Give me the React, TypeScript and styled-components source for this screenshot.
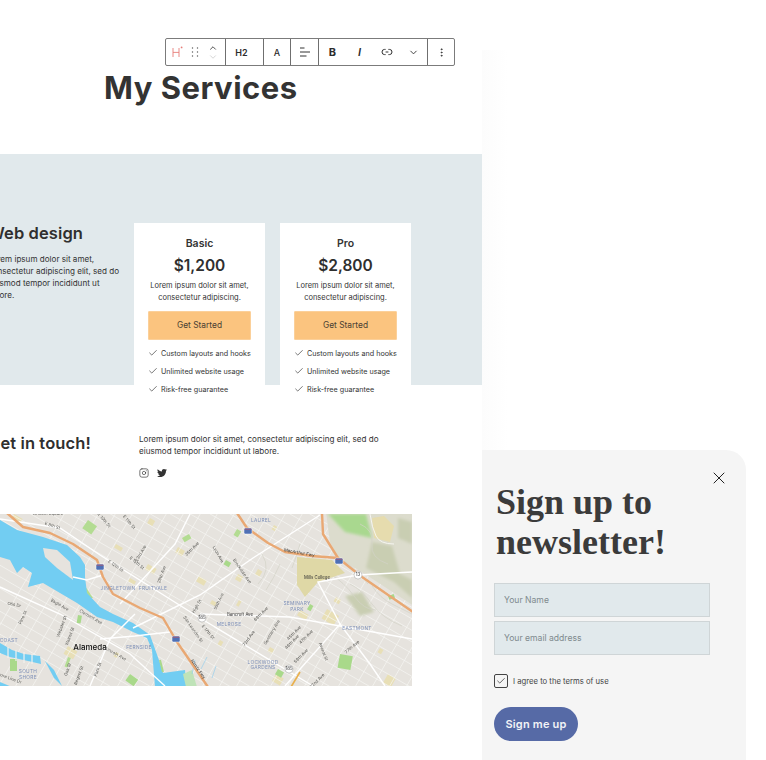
import React from 'react'
import styled, { createGlobalStyle } from 'styled-components'
import { Check, ChevronDown, ChevronUp, Instagram, MoreVertical, X } from 'lucide-react'
import { FaTwitter } from 'react-icons/fa'

const GlobalStyle = createGlobalStyle`
  html, body { margin: 0; padding: 0; background: #fff; }
  body { font-family: Inter, "Noto Sans", sans-serif; color: #333; }
  * { box-sizing: border-box; }
`

const Stage = styled.div`
  display: flex;
  width: 766px;
  height: 760px;
  overflow: hidden;
  background: #fff;
`
const PageColumn = styled.main`
  position: relative;
  flex: 0 0 482px;
  &::after {
    content: '';
    position: absolute;
    top: 50px;
    left: 100%;
    width: 26px;
    height: 400px;
    background: linear-gradient(90deg, #fcfcfc, #fff);
  }
`
const TitleBlock = styled.header`
  height: 154px;
  padding: 69px 0 0 104px;
`
const Title = styled.h1`
  margin: 0;
  font-size: 31px;
  line-height: 38px;
  font-weight: 700;
  color: #333;
  letter-spacing: 0.5px;
`

/* block toolbar */
const Toolbar = styled.div`
  position: absolute;
  top: 38px;
  left: 165px;
  display: flex;
  width: 290px;
  height: 28px;
  background: #fff;
  border: 1px solid #7b7b7b;
  border-radius: 2px;
`
const ToolGroup = styled.div<{ $width: number; $last?: boolean; $inset?: number; $trail?: number }>`
  display: flex;
  flex: 0 0 ${({ $width }) => $width}px;
  align-items: center;
  padding-left: ${({ $inset }) => $inset ?? 0}px;
  padding-right: ${({ $trail }) => $trail ?? 0}px;
  border-right: ${({ $last }) => ($last ? 'none' : '1px solid #6f6f6f')};
`
const ToolSlot = styled.span<{ $width?: number }>`
  display: flex;
  flex: ${({ $width }) => ($width ? `0 0 ${$width}px` : '1')};
  align-items: center;
  justify-content: center;
`
const ToolText = styled.span<{ $italic?: boolean; $size?: number; $weight?: number }>`
  font-size: ${({ $size }) => $size ?? 9}px;
  font-weight: ${({ $weight }) => $weight ?? 600};
  font-style: ${({ $italic }) => ($italic ? 'italic' : 'normal')};
  color: #2c2c2c;
`
const MoverStack = styled.div`
  display: flex;
  flex-direction: column;
  align-items: center;
  color: #333;
  svg + svg { color: #bbb; margin-top: -1px; }
`

/* services band */
const Band = styled.section`
  display: flex;
  height: 231px;
  padding-top: 68px;
  background: #e1e9ec;
`
const Intro = styled.div`
  flex: 0 0 138px;
  margin-left: -12px;
  margin-right: 8px;
`
const SectionHeading = styled.h2`
  margin: 0;
  font-size: 16.5px;
  line-height: 22px;
  font-weight: 600;
  color: #2f2f2f;
  letter-spacing: 0.1px;
  white-space: nowrap;
`
const IntroText = styled.p`
  width: 136px;
  margin: 9px 0 0;
  font-size: 8.1px;
  line-height: 12px;
  color: #333;
`
const Card = styled.article`
  flex: 0 0 131px;
  height: 180px;
  margin-top: 1px;
  margin-right: 15px;
  padding: 14px 14px 0;
  background: #fff;
  text-align: center;
`
const PlanName = styled.h3`
  margin: 0;
  font-size: 10.5px;
  line-height: 13px;
  font-weight: 600;
  color: #333;
`
const Price = styled.div`
  margin-top: 5px;
  font-size: 15.5px;
  line-height: 22px;
  font-weight: 600;
  color: #2f2f2f;
`
const PlanText = styled.p`
  margin: 3px 0 0;
  font-size: 7.5px;
  line-height: 12px;
  color: #333;
`
const CtaButton = styled.button`
  display: block;
  width: 103px;
  height: 29px;
  margin-top: 7px;
  padding: 0 0 2px;
  border: 1px solid #fbd09a;
  border-radius: 1px;
  background: #fbc47f;
  font-family: inherit;
  font-size: 8.4px;
  color: #4a4032;
`
const FeatureList = styled.ul`
  margin: 4px 0 0;
  padding: 0;
  list-style: none;
  text-align: left;
`
const Feature = styled.li`
  display: flex;
  align-items: center;
  gap: 3px;
  height: 18.2px;
  font-size: 7.2px;
  color: #333;
  white-space: nowrap;
  svg { flex: none; }
`

/* contact */
const Contact = styled.section`
  display: flex;
  height: 129px;
  padding-top: 48px;
`
const ContactHead = styled.div`
  flex: 0 0 151px;
  margin: -1px 0 0 -12px;
`
const ContactBody = styled.div`
  width: 250px;
`
const ContactText = styled.p`
  margin: 0;
  font-size: 8.1px;
  line-height: 12px;
  color: #333;
`
const Socials = styled.div`
  display: flex;
  align-items: center;
  gap: 8px;
  margin-top: 11px;
  color: #333;
`
const MapFrame = styled.div`
  width: 412px;
  height: 172px;
  overflow: hidden;
  svg { display: block; }
`
const MapLabel = styled.text<{ $kind: 'street' | 'area' | 'city' | 'road' }>`
  font-family: Inter, sans-serif;
  font-size: ${({ $kind }) => ($kind === 'city' ? 8 : $kind === 'area' ? 4.8 : 4.3)}px;
  font-weight: ${({ $kind }) => ($kind === 'city' ? 500 : 400)};
  letter-spacing: ${({ $kind }) => ($kind === 'area' ? 0.3 : 0)}px;
  fill: ${({ $kind }) => ($kind === 'area' ? '#7e90b8' : $kind === 'city' ? '#111' : $kind === 'road' ? '#333' : '#5c5c58')};
  text-anchor: middle;
`

/* newsletter */
const SidePane = styled.aside`
  flex: 0 0 264px;
  padding-top: 450px;
`
const Panel = styled.div`
  position: relative;
  height: 310px;
  padding: 32px 36px 0 12px;
  background: #f5f5f5;
  border-top-right-radius: 20px;
`
const CloseButton = styled.button`
  position: absolute;
  top: 18px;
  right: 17px;
  display: flex;
  padding: 0;
  border: 0;
  background: none;
  color: #222;
`
const PanelTitle = styled.h2`
  margin: 0 0 21px 2px;
  font-family: "Liberation Serif", serif;
  font-size: 36px;
  line-height: 40px;
  font-weight: 700;
  color: #3b3b3b;
`
const Field = styled.input`
  display: block;
  width: 216px;
  height: 34px;
  margin-bottom: 4px;
  padding: 0 9px;
  background: #e1e9ec;
  border: 1px solid #cfd5d7;
  border-radius: 0;
  font-family: inherit;
  font-size: 8.6px;
  outline: none;
  &::placeholder { color: #7f8a8e; opacity: 1; }
`
const Agree = styled.label`
  display: flex;
  align-items: center;
  gap: 5px;
  margin-top: 19px;
  font-size: 7.7px;
  color: #444;
`
const Tick = styled.span`
  display: flex;
  align-items: center;
  justify-content: center;
  width: 14px;
  height: 14px;
  border: 1.5px solid #444;
  border-radius: 2px;
  color: #333;
`
const SubmitButton = styled.button`
  display: block;
  width: 84px;
  height: 34px;
  margin-top: 19px;
  padding: 0;
  border: 0;
  border-radius: 17px;
  background: #566aa6;
  font-family: inherit;
  font-size: 11px;
  font-weight: 600;
  letter-spacing: 0.2px;
  color: #f2f3f7;
`

function HeadingIcon() {
  return (
    <svg width="14" height="14" viewBox="0 0 14 14" fill="none" stroke="#e77d78" strokeWidth="0.9">
      <path d="M3 3v9M9 3v9M3 7.4h6" />
      <circle cx="11.6" cy="2.4" r="0.9" fill="#e77d78" stroke="none" />
    </svg>
  )
}
function DragIcon() {
  return (
    <svg width="8" height="10" viewBox="0 0 8 10" fill="#555">
      {[1, 5, 9].map((cy) => [1.5, 6.5].map((cx) => <rect key={`${cx}-${cy}`} x={cx - 0.6} y={cy - 0.6} width="1.2" height="1.2" />))}
    </svg>
  )
}
function AlignIcon() {
  return (
    <svg width="12" height="12" viewBox="0 0 12 12" stroke="#333" strokeWidth="1">
      <path d="M1 2h4.5M1 6h10M1 10h6.5" />
    </svg>
  )
}
function LinkIcon() {
  return (
    <svg width="12" height="12" viewBox="0 0 12 12" fill="none" stroke="#333" strokeWidth="1">
      <path d="M4.6 3.4H3.6a2.6 2.6 0 0 0 0 5.2h1M7.4 3.4h1a2.6 2.6 0 0 1 0 5.2h-1M4.6 6h2.8" />
    </svg>
  )
}

const toPoints = (pts: number[][]) => pts.map((p) => p.join(',')).join(' ')

// city street grid, two families of parallel lines
const streetsA = Array.from({ length: 34 }, (_, i) => -260 + i * 11.5)
const streetsB = Array.from({ length: 34 }, (_, i) => -40 + i * 17)

const majorRoads = [
  [[0, 5], [60, 14], [100, 41], [200, 104], [313, 172]],
  [[0, 73], [60, 100], [130, 140], [165, 172]],
  [[133, 114], [200, 81], [253, 44], [320, 1]],
  [[120, 90], [175, 30], [190, 0]],
  [[200, 100], [290, 103], [412, 125]],
  [[90, 172], [110, 125], [135, 100]],
  [[285, 172], [340, 110], [370, 150], [385, 172]],
  [[340, 110], [318, 68], [358, 61], [412, 58]],
  [[73, 63], [87, 66], [103, 61]],
  [[100, 125], [135, 122], [170, 118]]
]
const parks = [
  [88, 6, 11, 10, '#b3dc92', 35],
  [182, 24, 8, 5, '#b3dc92', -30],
  [226, 46, 6, 5, '#a9d98a', 30],
  [237, 15, 5, 7, '#b3dc92', 30],
  [340, 140, 13, 14, '#a9d98a', 10],
  [278, 155, 7, 6, '#a9d98a', 30],
  [310, 90, 4, 6, '#a9d98a', 30],
  [78, 101, 4, 8, '#a9d98a', 10],
  [68, 143, 3, 10, '#b3dc92', 20],
  [10, 145, 7, 12, '#a9d98a', 0],
  [388, 82, 6, 4, '#a9d98a', -20],
  [130, 160, 10, 8, '#a9d98a', 35]
]
const sandPatches = [
  [14, 0, 10, 5], [150, 4, 6, 6], [116, 30, 8, 4], [178, 33, 8, 6], [148, 50, 10, 6], [199, 62, 9, 6], [130, 64, 7, 4],
  [238, 60, 6, 6], [258, 55, 5, 6], [274, 11, 4, 5], [212, 86, 6, 4], [239, 86, 3, 6], [68, 132, 11, 9], [220, 126, 4, 5],
  [300, 96, 10, 6], [327, 95, 14, 11], [336, 83, 6, 5], [276, 160, 9, 8], [270, 133, 5, 5], [380, 134, 4, 5], [388, 160, 9, 10], [116, 138, 4, 5]
]
const hillShade = [
  [[372, 28], [392, 32], [400, 60], [412, 66], [412, 84], [394, 68], [366, 54]],
  [[345, 82], [362, 78], [374, 98], [360, 102]],
  [[398, 4], [412, 8], [412, 30], [398, 24]]
]
const contourLines = [
  'M330 60q14 8 24 22t22 14',
  'M350 70q12 6 22 20t30 22',
  'M372 72q8 12 20 18t20 10',
  'M342 46q12 6 26 24',
  'M300 30q-4 14 -8 24',
  'M262 40q10 16 -4 30',
  'M280 50q-6 14 -14 26',
  'M360 10q14 6 12 20t16 20'
]
const labels: [string, number, number, number, 'street' | 'area' | 'city' | 'road'][] = [
  ['Lincoln Square', 48, 1, 0, 'street'], ['E 8th St', 52, 13, 18, 'street'], ['E 10th St', 103, 7, 50, 'street'], ['E 11th St', 128, 9, 50, 'street'],
  ['E 12th St', 115, 53, 35, 'street'], ['E 15th St', 136, 50, 40, 'street'], ['23rd Ave', 142, 40, -60, 'street'], ['29th Ave', 163, 61, -70, 'street'],
  ['35th Ave', 193, 36, -45, 'street'], ['Lyon Ave', 217, 41, 60, 'street'], ['Brookdale Ave', 241, 58, 55, 'street'], ['55th Ave', 220, 88, -65, 'street'],
  ['High St', 198, 93, -60, 'street'], ['San Leandro St', 192, 116, 55, 'street'], ['E 17th St', 207, 119, 50, 'street'], ['Bancroft Ave', 240, 102, 0, 'road'],
  ['69th Ave', 262, 101, -45, 'street'], ['Seminary Ave', 273, 119, -60, 'street'], ['73rd Ave', 250, 125, -55, 'street'], ['MacArthur Fwy', 299, 40, 10, 'road'],
  ['Mills College', 317, 65, 0, 'road'], ['Eagle Ave', 59, 92, 30, 'street'], ['Clement Ave', 90, 104, 30, 'street'], ['Pine St', 24, 104, -65, 'street'],
  ['Webster St', 63, 113, -70, 'street'], ['Walnut St', 71, 123, -70, 'street'], ['Lincoln Ave', 115, 141, 30, 'street'], ['Oak St', 69, 156, -70, 'street'],
  ['Regent St', 80, 162, -70, 'street'], ['Park St', 99, 156, -70, 'street'], ['Shore Line Dr', 8, 165, 20, 'street'], ['45th Ave', 295, 120, -45, 'street'],
  ['46th Ave', 293, 129, -45, 'street'], ['47th Ave', 307, 124, -45, 'street'], ['59th Ave', 302, 143, -45, 'street'], ['Avenal St', 322, 138, 70, 'street'],
  ['77th Ave', 353, 134, -40, 'street'], ['82nd Ave', 318, 168, -45, 'street'], ['Nimitz Fwy', 197, 156, 55, 'road'], ['Otis Dr', 14, 92, 10, 'street'],
  ['SEMINARY', 297, 91, 0, 'area'], ['PARK', 297, 97, 0, 'area'], ['EASTMONT', 357, 116, 0, 'area'], ['MELROSE', 229, 112, 0, 'area'], ['LOCKWOOD', 263, 150, 0, 'area'],
  ['GARDENS', 263, 155, 0, 'area'], ['LAUREL', 261, 8, 0, 'area'], ['JINGLETOWN', 118, 76, 0, 'area'], ['FRUITVALE', 153, 76, 0, 'area'], ['FERNSIDE', 139, 135, 0, 'area'],
  ['SOUTH', 28, 159, 0, 'area'], ['SHORE', 28, 165, 0, 'area'], ['N COAST', 6, 128, 0, 'area'], ['Alameda', 90, 136, 0, 'city']
]
const interstates = [[100, 53], [176, 125], [248, 17], [339, 47]]
const stateRoutes = [[202, 104, '185'], [289, 155, '185'], [358, 61, '13']] as [number, number, string][]

function CityMap() {
  return (
    <svg width="412" height="172" viewBox="0 0 412 172">
      <defs>
        <filter id="soft"><feGaussianBlur stdDeviation="0.3" /></filter>
        <filter id="softer"><feGaussianBlur stdDeviation="1.6" /></filter>
      </defs>
      <g filter="url(#soft)">
        <rect x="-4" y="-4" width="420" height="180" fill="#e6e3de" />
        {sandPatches.map(([x, y, w, h]) => (
          <rect key={`${x}-${y}`} x={x} y={y} width={w} height={h} fill="#e8dfb6" transform={`rotate(30 ${x} ${y})`} />
        ))}
        <g stroke="#f6f6f4" strokeWidth="0.7">
          {streetsA.map((c) => <line key={c} x1="-10" y1={c - 5} x2="420" y2={c + 243} />)}
          {streetsB.map((c) => <line key={c} x1={c} y1="180" x2={c + 110} y2="-10" />)}
        </g>
        {parks.map(([x, y, w, h, fill, a]) => (
          <rect key={`${x}-${y}`} x={x as number} y={y as number} width={w as number} height={h as number} fill={fill as string} transform={`rotate(${a} ${x} ${y})`} />
        ))}
        {/* estuary */}
        <polygon points={toPoints([[85, 72], [93, 84], [90, 84], [83, 74]])} fill="#b3dc92" />
        <polygon
          fill="#72cdf2"
          points={toPoints([[0, 6], [17, 16], [43, 23], [67, 31], [80, 43], [85, 51], [85, 63], [87, 79], [100, 93], [113, 100], [133, 109], [150, 121], [160, 149], [163, 159], [185, 156], [187, 173], [155, 173], [152, 136], [147, 124], [133, 118], [113, 108], [97, 103], [77, 89], [60, 79], [43, 69], [28, 73], [32, 59], [23, 53], [17, 59], [10, 46], [0, 43]])}
        />
        <polygon fill="#e6e3de" points={toPoints([[43, 34], [57, 36], [70, 48], [73, 66], [57, 54], [45, 43]])} />
        <polygon fill="#72cdf2" points={toPoints([[0, 129], [12, 136], [24, 140], [40, 142], [41, 150], [28, 147], [10, 143], [0, 139]])} />
        <g stroke="#f2f1ee" strokeWidth="1.2">
          <line x1="8" y1="133" x2="8" y2="144" />
          <line x1="16" y1="136" x2="16" y2="147" />
          <line x1="24" y1="138" x2="24" y2="149" />
          <line x1="32" y1="140" x2="32" y2="150" />
        </g>
        <polygon fill="#72cdf2" points={toPoints([[45, 147], [54, 156], [62, 172], [54, 164]])} />
        <polygon fill="#72cdf2" points={toPoints([[0, 168], [12, 173], [0, 173]])} />
        <polygon fill="#bfe3b8" points={toPoints([[183, 160], [192, 156], [197, 173], [186, 173]])} />
        <path d="M160 146l3 12" stroke="#a9d98a" strokeWidth="2" />
        <path d="M195 146l-3 14M207 143l-6 12M216 152l-4 12" stroke="#8ccdf0" strokeWidth="0.6" fill="none" />
        {/* hills */}
        <polygon fill="#dcdccd" points={toPoints([[326, -2], [414, -2], [414, 92], [365, 60], [338, 44], [330, 28]])} />
        <g filter="url(#softer)">
          <polygon fill="#a9d88f" points={toPoints([[328, 0], [366, 0], [372, 24], [345, 18]])} />
          {hillShade.map((pts, i) => <polygon key={i} fill="#c9ceb2" points={toPoints(pts)} />)}
        </g>
        <polygon fill="#e6dcae" points={toPoints([[372, 4], [384, 2], [394, 12], [390, 28], [374, 24]])} />
        <g stroke="#d3d3c7" strokeWidth="0.7" fill="none">
          {contourLines.map((d) => <path key={d} d={d} />)}
        </g>
        <polygon fill="#dfd8a6" points={toPoints([[297, 43], [332, 46], [345, 59], [318, 68], [305, 83], [297, 71]])} />
        <path d="M370 0q2 14 6 22t18 8" stroke="#f7f7f3" strokeWidth="0.9" fill="none" />
        <g stroke="#ffffff" strokeWidth="1.4" fill="none">
          {majorRoads.map((pts, i) => <polyline key={i} points={toPoints(pts)} />)}
        </g>
        {/* freeways */}
        <g stroke="#e9a873" strokeWidth="2.4" fill="none" strokeLinejoin="round">
          <polyline points={toPoints([[7, -1], [23, 13], [50, 19], [73, 30], [97, 46], [103, 63], [113, 80], [140, 94], [163, 104], [177, 128], [208, 173]])} />
          <polyline points={toPoints([[237, -1], [247, 14], [268, 29], [285, 38], [312, 42], [338, 44], [362, 63], [413, 98]])} />
          <polyline points={toPoints([[322, -1], [323, 20], [338, 44]])} />
        </g>
        <path d="M291 173l9-15" stroke="#e9b04d" strokeWidth="1.6" />
        {interstates.map(([x, y]) => (
          <g key={`${x}-${y}`}>
            <rect x={x - 4} y={y - 3} width="8" height="6" rx="1.5" fill="#4f70b5" stroke="#fff" strokeWidth="0.5" />
            <rect x={x - 3.4} y={y - 2.4} width="6.8" height="1.2" fill="#d9534f" opacity="0.5" />
          </g>
        ))}
        {stateRoutes.map(([x, y, n]) => (
          <g key={`${x}-${y}`}>
            <circle cx={x} cy={y} r="4" fill="#fff" stroke="#8c8c8c" strokeWidth="0.4" />
            <MapLabel $kind="road" x={x} y={y + 1.4}>{n}</MapLabel>
          </g>
        ))}
        {labels.map(([t, x, y, a, kind]) => (
          <MapLabel key={`${t}-${x}`} $kind={kind} x={x} y={y} transform={a ? `rotate(${a} ${x} ${y})` : undefined}>{t}</MapLabel>
        ))}
      </g>
    </svg>
  )
}

const plans = [
  { name: 'Basic', price: '$1,200' },
  { name: 'Pro', price: '$2,800' }
]
const features = ['Custom layouts and hooks', 'Unlimited website usage', 'Risk-free guarantee']

export default function App() {
  return (
    <Stage>
      <GlobalStyle />
      <PageColumn>
        <TitleBlock>
          <Title>My Services</Title>
        </TitleBlock>
        <Toolbar>
          <ToolGroup $width={60} $inset={2}>
            <ToolSlot $width={18}><HeadingIcon /></ToolSlot>
            <ToolSlot $width={18}><DragIcon /></ToolSlot>
            <ToolSlot $width={18}>
              <MoverStack>
                <ChevronUp size={10} strokeWidth={2} />
                <ChevronDown size={10} strokeWidth={1.5} />
              </MoverStack>
            </ToolSlot>
          </ToolGroup>
          <ToolGroup $width={38} $trail={6}>
            <ToolSlot><ToolText>H2</ToolText></ToolSlot>
          </ToolGroup>
          <ToolGroup $width={27}>
            <ToolSlot><ToolText $weight={500}>A</ToolText></ToolSlot>
          </ToolGroup>
          <ToolGroup $width={28}>
            <ToolSlot><AlignIcon /></ToolSlot>
          </ToolGroup>
          <ToolGroup $width={109}>
            <ToolSlot $width={27}><ToolText $size={11} $weight={700}>B</ToolText></ToolSlot>
            <ToolSlot $width={27}><ToolText $size={11} $italic>I</ToolText></ToolSlot>
            <ToolSlot $width={27}><LinkIcon /></ToolSlot>
            <ToolSlot $width={27}><ChevronDown size={11} strokeWidth={2} color="#333" /></ToolSlot>
          </ToolGroup>
          <ToolGroup $width={26} $last>
            <ToolSlot><MoreVertical size={11} strokeWidth={2} color="#333" /></ToolSlot>
          </ToolGroup>
        </Toolbar>
        <Band>
          <Intro>
            <SectionHeading>Web design</SectionHeading>
            <IntroText>Lorem ipsum dolor sit amet, consectetur adipiscing elit, sed do eiusmod tempor incididunt ut labore.</IntroText>
          </Intro>
          {plans.map((plan) => (
            <Card key={plan.name}>
              <PlanName>{plan.name}</PlanName>
              <Price>{plan.price}</Price>
              <PlanText>Lorem ipsum dolor sit amet, consectetur adipiscing.</PlanText>
              <CtaButton>Get Started</CtaButton>
              <FeatureList>
                {features.map((f) => (
                  <Feature key={f}>
                    <Check size={10} strokeWidth={1.6} />
                    {f}
                  </Feature>
                ))}
              </FeatureList>
            </Card>
          ))}
        </Band>
        <Contact>
          <ContactHead>
            <SectionHeading>Get in touch!</SectionHeading>
          </ContactHead>
          <ContactBody>
            <ContactText>Lorem ipsum dolor sit amet, consectetur adipiscing elit, sed do eiusmod tempor incididunt ut labore.</ContactText>
            <Socials>
              <Instagram size={10} strokeWidth={1.6} />
              <FaTwitter size={10} />
            </Socials>
          </ContactBody>
        </Contact>
        <MapFrame>
          <CityMap />
        </MapFrame>
      </PageColumn>
      <SidePane>
        <Panel>
          <CloseButton aria-label="Close">
            <X size={20} strokeWidth={1.2} />
          </CloseButton>
          <PanelTitle>Sign up to newsletter!</PanelTitle>
          <Field placeholder="Your Name" />
          <Field placeholder="Your email address" />
          <Agree>
            <Tick><Check size={10} strokeWidth={1.8} /></Tick>
            I agree to the terms of use
          </Agree>
          <SubmitButton>Sign me up</SubmitButton>
        </Panel>
      </SidePane>
    </Stage>
  )
}
